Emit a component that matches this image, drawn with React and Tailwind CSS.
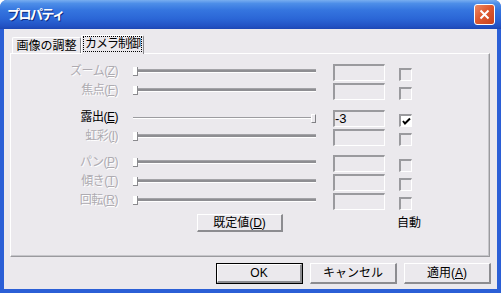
import React from "react";

const FONT = "font-['Liberation_Sans','Noto_Sans_CJK_JP',sans-serif]";
const DIS = "text-[#aeabb1] [text-shadow:1px_1px_0_#ffffff]";

function Label({ name, k, enabled }) {
  return (
    <div
      className={`w-[107px] text-right text-[12px] leading-[14px] tracking-[-0.5px] whitespace-nowrap ${
        enabled ? "text-black" : DIS
      }`}
    >
      {name}(<u>{k}</u>)
    </div>
  );
}

function Slider({ enabled }) {
  if (enabled) {
    return (
      <div className="ml-[15px] w-[183px] h-[17px] relative">
        <div className="absolute left-0 right-0 top-[7px] h-[1px] bg-[#9c9ca0]" />
        <div className="absolute left-0 right-0 top-[8px] h-[1px] bg-white" />
        <div className="absolute left-[178px] top-[4px] w-[5px] h-[9px] bg-[#ebe9ed] border-t border-l border-white border-r border-b border-r-[#808084] border-b-[#808084]" />
      </div>
    );
  }
  return (
    <div className="ml-[15px] w-[183px] h-[17px] relative">
      <div className="absolute left-0 right-0 top-[5px] h-[1px] bg-[#a3a3a7]" />
      <div className="absolute left-0 right-0 top-[6px] h-[2px] bg-[#8e8e92]" />
      <div className="absolute left-0 right-0 top-[8px] h-[1px] bg-white" />
      <div className="absolute left-0 top-[3px] w-[5px] h-[9px] bg-white border-r border-b border-r-[#8a8a8e] border-b-[#8a8a8e]" />
    </div>
  );
}

function Edit({ value }) {
  return (
    <div className="ml-[17px] w-[52px] h-[17px] border-t-2 border-l-2 border-t-[#9a9a9e] border-l-[#9a9a9e] border-b border-r border-b-white border-r-white bg-[#ebe9ed] text-[13px] leading-[14px] text-black">
      {value}
    </div>
  );
}

function Check({ checked }) {
  return (
    <div
      className={`ml-[14px] mt-[4px] w-[13px] h-[13px] border-t-2 border-l-2 border-t-[#9a9a9e] border-l-[#9a9a9e] border-b border-r border-b-white border-r-white ${
        checked ? "bg-white" : "bg-[#ebe9ed]"
      } flex items-center justify-center`}
    >
      {checked && (
        <svg width="9" height="9" viewBox="0 0 9 9">
          <path d="M1 4 L3 6.5 L8 1.5" stroke="#000" strokeWidth="2" fill="none" />
        </svg>
      )}
    </div>
  );
}

function Row({ name, k, enabled, value, checked }) {
  return (
    <div className="flex items-start h-[19px]">
      <Label name={name} k={k} enabled={enabled} />
      <Slider enabled={enabled} />
      <Edit value={value} />
      <Check checked={checked} />
    </div>
  );
}

function Btn({ children, def, w = "w-[87px]", h = "h-[21px]" }) {
  return (
    <div
      className={`${w} ${h} ${
        def ? "border border-black" : ""
      } bg-[#ebe9ed] flex`}
    >
      <div className="flex-1 flex items-center justify-center border-t border-l border-white border-r-2 border-b-2 border-r-[#8c8c90] border-b-[#8c8c90] text-[12px] text-black leading-none whitespace-nowrap">
        {children}
      </div>
    </div>
  );
}

export default function App() {
  return (
    <div className={`w-[501px] h-[293px] bg-white ${FONT}`}>
      <div className="w-[501px] h-[293px] flex flex-col rounded-t-[7px] bg-[#2b5fd6] overflow-hidden">
        {/* Title bar */}
        <div className="h-[29px] shrink-0 flex items-center justify-between pl-[7px] pr-[6px] bg-[linear-gradient(to_bottom,#79aef0_0%,#4d8ee8_12%,#3575df_35%,#2b66d6_65%,#2252c4_90%,#1d47b4_100%)]">
          <span className="text-white font-bold text-[13px] tracking-[-1.5px] [text-shadow:1px_1px_0_#0d2a80]">
            プロパティ
          </span>
          <div className="w-[21px] h-[21px] rounded-[3px] border border-white bg-[linear-gradient(135deg,#ec8a66_0%,#df5a30_45%,#c8421c_100%)] flex items-center justify-center">
            <svg width="11" height="11" viewBox="0 0 11 11">
              <path d="M1.5 1.5 L9.5 9.5 M9.5 1.5 L1.5 9.5" stroke="#fff" strokeWidth="2" />
            </svg>
          </div>
        </div>

        {/* Body */}
        <div className="flex-1 mx-[4px] mb-[4px] bg-[#ebe9ed] flex flex-col">
          {/* Tabs */}
          <div className="flex items-end pl-[8px] pt-[6px] h-[24px] relative z-10">
            <div className="w-[69px] h-[16px] border-t border-l border-white border-r border-r-[#8a8a8e] rounded-t-[2px] flex items-center justify-center text-[12px] leading-none text-black whitespace-nowrap">
              画像の調整
            </div>
            <div className="w-[63px] h-[19px] -mb-[1px] bg-[#ebe9ed] border-t border-l border-white border-r border-r-[#8a8a8e] rounded-t-[2px] flex items-start justify-center pt-[1px]">
              <div className="outline outline-1 outline-dotted outline-black px-[1px] h-[14px] flex items-center text-[12px] leading-none tracking-[-1px] text-black whitespace-nowrap">
                カメラ制御
              </div>
            </div>
          </div>

          {/* Panel */}
          <div className="ml-[6px] w-[480px] h-[204px] border-t border-l border-white border-r border-b border-r-[#9a9a9e] border-b-[#9a9a9e] shadow-[inset_-1px_-1px_0_#c6c6ca] flex flex-col pt-[10px]">
            <Row name="ズーム" k="Z" />
            <Row name="焦点" k="F" />
            <div className="h-[8px]" />
            <Row name="露出" k="E" enabled value="-3" checked />
            <Row name="虹彩" k="I" />
            <div className="h-[7px]" />
            <Row name="パン" k="P" />
            <Row name="傾き" k="T" />
            <Row name="回転" k="R" />
            <div className="flex items-center mt-[2px]">
              <div className="ml-[186px]">
                <Btn w="w-[86px]" h="h-[18px]">
                  既定値(<u>D</u>)
                </Btn>
              </div>
              <div className="ml-[114px] text-[12px] text-black leading-none">自動</div>
            </div>
          </div>

          {/* Bottom buttons */}
          <div className="flex justify-end gap-[7px] pr-[6px] mt-[6px]">
            <Btn def>OK</Btn>
            <Btn>キャンセル</Btn>
            <Btn>
              適用(<u>A</u>)
            </Btn>
          </div>
        </div>
      </div>
    </div>
  );
}
